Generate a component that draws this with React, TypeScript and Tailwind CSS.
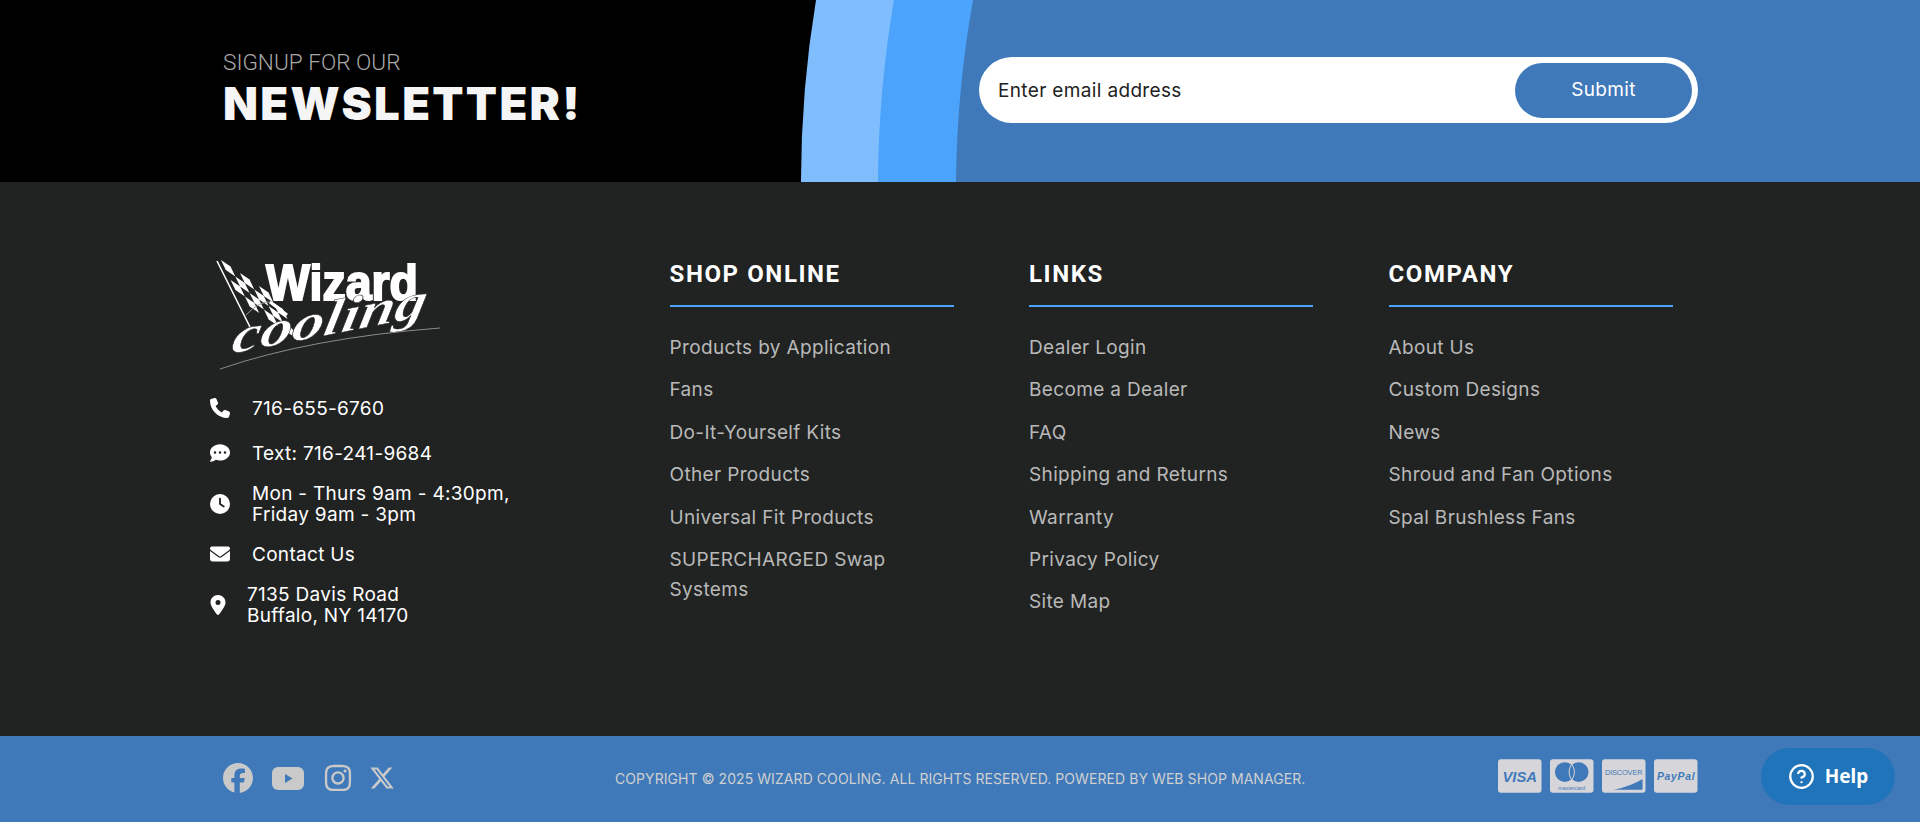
import { FaFacebook, FaInstagram, FaXTwitter, FaPhone, FaCommentDots, FaClock, FaEnvelope, FaLocationDot } from "react-icons/fa6";
import { FiHelpCircle } from "react-icons/fi";

const shopLinks = ["Products by Application", "Fans", "Do-It-Yourself Kits", "Other Products", "Universal Fit Products", "SUPERCHARGED Swap Systems"];
const siteLinks = ["Dealer Login", "Become a Dealer", "FAQ", "Shipping and Returns", "Warranty", "Privacy Policy", "Site Map"];
const companyLinks = ["About Us", "Custom Designs", "News", "Shroud and Fan Options", "Spal Brushless Fans"];

const flagSquares = [
  [0, 0], [2, 0], [4, 0], [1, 1], [3, 1], [5, 1], [0, 2], [2, 2], [4, 2], [1, 3], [3, 3], [5, 3],
];

function Logo() {
  return (
    <svg width="240" height="124" viewBox="0 0 240 124" className="block blur-[0.4px]">
      <path d="M7 5 L40 71" stroke="#fff" strokeWidth="1.6" />
      <g transform="matrix(9.5 6.5 4.8 10 11 4)" fill="#fff">
        {flagSquares.map(([col, row]) => (
          <rect key={`${col}-${row}`} x={col} y={row} width="1" height="1" />
        ))}
      </g>
      <path d="M36 59 Q50 44 62 46" stroke="#999" strokeWidth="1" fill="none" />
      <path d="M60 46 L77 59" stroke="#fff" strokeWidth="3" />
      <text x="56" y="44" fontFamily="'Liberation Sans', sans-serif" fontWeight="700" fontSize="50" textLength="152" lengthAdjust="spacingAndGlyphs" fill="#fff" stroke="#fff" strokeWidth="2">Wizard</text>
      <text x="0" y="0" transform="translate(20 98) rotate(-11) skewX(-22)" fontFamily="'Liberation Serif', serif" fontStyle="italic" fontWeight="700" fontSize="48" textLength="198" lengthAdjust="spacingAndGlyphs" fill="#fff" stroke="#212322" strokeWidth="0.5">cooling</text>
      <path d="M10 113 Q100 82 230 72" stroke="#8a8a8a" strokeWidth="1" fill="none" />
    </svg>
  );
}

function LinkColumn({ title, links }: { title: string; links: string[] }) {
  return (
    <div className="w-[284px] mr-[75.5px]">
      <h3 className="font-['Roboto',sans-serif] font-bold text-[24px] leading-[30px] tracking-[1.6px] text-white">{title}</h3>
      <div className="mt-[16px] mb-[26px] h-[2px] bg-[#4ba3fb]" />
      <ul>
        {links.map((link) => (
          <li key={link} className="mb-[12.4px] text-[19px] leading-[30px] tracking-[0.35px] text-[#b9b9b9]">
            {link}
          </li>
        ))}
      </ul>
    </div>
  );
}

function ContactRow({ icon, children, className }: { icon: React.ReactNode; children: React.ReactNode; className: string }) {
  return (
    <div className={`flex items-center text-white text-[19px] leading-[21px] tracking-[0.3px] ${className}`}>
      {icon}
      {children}
    </div>
  );
}

function PayCard({ children }: { children: React.ReactNode }) {
  return (
    <svg width="43.5" height="34" viewBox="0 0 44 34" className="block">
      <rect width="44" height="34" rx="3" fill="#d6d6da" />
      {children}
    </svg>
  );
}

export default function App() {
  return (
    <div className="relative w-full h-[822px] overflow-hidden font-['Inter',sans-serif]">
      <section className="relative h-[182px] bg-black overflow-hidden">
        <svg className="absolute inset-0" width="1920" height="182" viewBox="0 0 1920 182">
          <path d="M816 0 A1104 1104 0 0 0 801 182 L1920 182 L1920 0 Z" fill="#7fbdff" />
          <path d="M894 0 A1104 1104 0 0 0 878 182 L1920 182 L1920 0 Z" fill="#4ba3fb" />
          <path d="M973 0 A1104 1104 0 0 0 956 182 L1920 182 L1920 0 Z" fill="#3f79b9" />
        </svg>
        <div className="relative flex items-center h-full pl-[223px]">
          <div className="w-[756px] -mt-[1px]">
            <p className="font-['Roboto',sans-serif] text-[22.6px] leading-[26px] font-light text-[#a8a8a8]">SIGNUP FOR OUR</p>
            <p className="mt-[1px] text-[45.5px] leading-[54px] font-black tracking-[2.3px] text-[#f5f5f5]">NEWSLETTER!</p>
          </div>
          <div className="flex items-center justify-between w-[719px] h-[66px] -mt-[2px] rounded-full bg-white pl-[19px] pr-[6px]">
            <span className="mt-[2px] text-[19px] tracking-[0.35px] text-[#222]">Enter email address</span>
            <button className="w-[177px] h-[55px] rounded-full bg-[#3f79b9] text-white text-[19px] tracking-[0.35px]">Submit</button>
          </div>
        </div>
      </section>

      <section className="flex h-[554px] bg-[#212322] pl-[210px] pt-[77px]">
        <div className="w-[459.5px] -mt-[3px]">
          <Logo />
          <div className="mt-[18px]">
            <ContactRow className="h-[21px]" icon={<FaPhone className="w-[20px] h-[20px] mr-[22px] -mt-[1px]" />}>716-655-6760</ContactRow>
            <ContactRow className="h-[21px] mt-[24px]" icon={<FaCommentDots className="w-[20px] h-[20px] mr-[22px] -mt-[1px]" />}>Text: 716-241-9684</ContactRow>
            <ContactRow className="mt-[19px]" icon={<FaClock className="w-[20px] h-[20px] mr-[22px] -mt-[1px]" />}>
              <span>Mon - Thurs 9am - 4:30pm,<br />Friday 9am - 3pm</span>
            </ContactRow>
            <ContactRow className="h-[21px] mt-[19px]" icon={<FaEnvelope className="w-[20px] h-[20px] mr-[22px] -mt-[1px]" />}>Contact Us</ContactRow>
            <ContactRow className="mt-[19px]" icon={<FaLocationDot className="w-[16px] h-[20px] mr-[21px] -mt-[1px]" />}>
              <span>7135 Davis Road<br />Buffalo, NY 14170</span>
            </ContactRow>
          </div>
        </div>
        <LinkColumn title="SHOP ONLINE" links={shopLinks} />
        <LinkColumn title="LINKS" links={siteLinks} />
        <LinkColumn title="COMPANY" links={companyLinks} />
      </section>

      <section className="flex items-center h-[86px] bg-[#3f79b9] pl-[223px]">
        <div className="flex items-center w-[392px] -mt-[2px] text-[#c9c9c9]">
          <FaFacebook className="w-[30px] h-[30px] mr-[19px]" />
          <svg width="32" height="23" viewBox="0 0 32 23" className="mr-[19px]">
            <rect width="32" height="23" rx="6" fill="currentColor" />
            <path d="M13 7 L20.5 11.5 L13 16 Z" fill="#3f79b9" />
          </svg>
          <FaInstagram className="w-[30px] h-[30px] mr-[16px]" />
          <FaXTwitter className="w-[26px] h-[26px]" />
        </div>
        <p className="w-[883px] -mt-[2px] text-[14px] tracking-[0.07px] uppercase text-[#d0d0d0]">Copyright © 2025 Wizard Cooling. All Rights Reserved. Powered by Web Shop Manager.</p>
        <div className="flex gap-[8.5px] -mt-[6px]">
          <PayCard>
            <text x="22" y="23" textAnchor="middle" fontFamily="'Liberation Sans', sans-serif" fontWeight="700" fontStyle="italic" fontSize="15" fill="#3f79b9">VISA</text>
          </PayCard>
          <PayCard>
            <circle cx="15" cy="13" r="10" fill="#3f79b9" />
            <circle cx="29" cy="13" r="10" fill="#3f79b9" />
            <path d="M22 5 Q16.5 13 22 21 Q27.5 13 22 5 Z" fill="#3f79b9" stroke="#d6d6da" strokeWidth="1" />
            <text x="22" y="31" textAnchor="middle" fontFamily="'Liberation Sans', sans-serif" fontSize="5.5" fill="#3f79b9">mastercard</text>
          </PayCard>
          <PayCard>
            <text x="22" y="16" textAnchor="middle" fontFamily="'Liberation Sans', sans-serif" fontSize="7.5" textLength="38" fill="#3f79b9">DISCOVER</text>
            <path d="M12 31 Q30 27 41 20 L41 31 Z" fill="#3f79b9" />
          </PayCard>
          <PayCard>
            <text x="22" y="21" textAnchor="middle" fontFamily="'Liberation Sans', sans-serif" fontWeight="700" fontStyle="italic" fontSize="10.5" textLength="38" fill="#3f79b9">PayPal</text>
          </PayCard>
        </div>
      </section>

      <div className="absolute left-[1761px] top-[748px] flex items-center justify-center gap-[10px] w-[134px] h-[57px] rounded-full bg-[#1f74ba] text-white font-['Noto_Sans',sans-serif] font-bold text-[19px]">
        <FiHelpCircle className="w-[27px] h-[27px]" />
        Help
      </div>
    </div>
  );
}
